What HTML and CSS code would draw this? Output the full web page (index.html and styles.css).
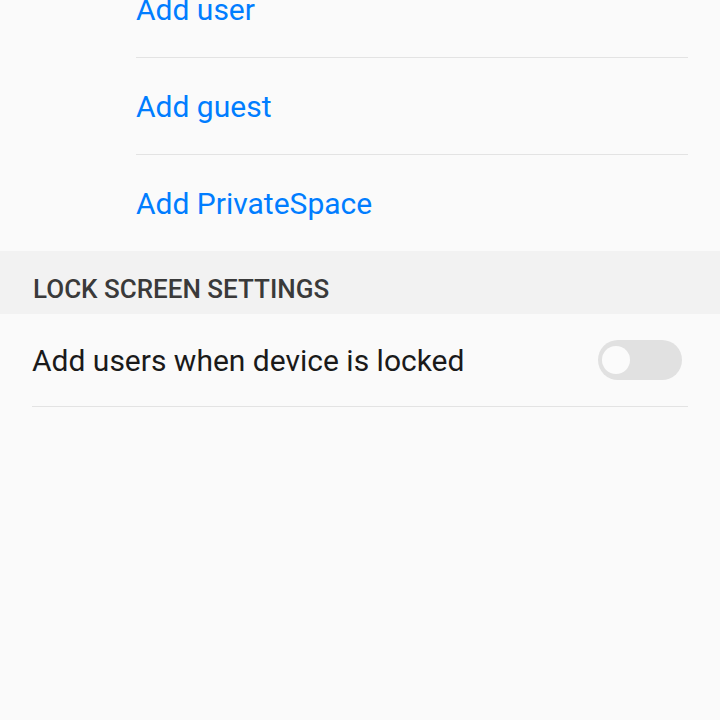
FILE: index.html
```html
<!DOCTYPE html>
<html lang="en">
  <head>
    <meta charset="UTF-8" />
    <meta name="viewport" content="width=device-width, initial-scale=1.0" />
    <title>Users</title>
    <link rel="stylesheet" href="styles.css">
  </head>
  <body>
    <main>
      <ul class="actions">
        <li class="action">Add user</li>
        <li class="action">Add guest</li>
        <li class="action">Add PrivateSpace</li>
      </ul>
      <h2 class="section-title">LOCK SCREEN SETTINGS</h2>
      <ul class="settings">
        <li class="setting">
          <span>Add users when device is locked</span>
          <span class="switch"><span class="thumb"></span></span>
        </li>
      </ul>
    </main>
  </body>
</html>
```

FILE: styles.css
```css
* {
  box-sizing: border-box;
  margin: 0;
  padding: 0;
}
html,
body {
  height: 100%;
}
body {
  background-color: #fafafa;
  font-family: Roboto, "Noto Sans", sans-serif;
  overflow: hidden;
}
ul {
  list-style: none;
}
.actions {
  margin-top: -39px;
}
.action {
  display: flex;
  align-items: center;
  height: 97px;
  margin: 0 32px 0 136px;
  border-bottom: 1px solid #e3e3e3;
  color: #007dff;
  font-size: 30px;
}
.action:last-child {
  height: 96px;
  border-bottom: none;
}
.section-title {
  display: flex;
  align-items: center;
  height: 63px;
  padding: 13px 0 0 33px;
  background-color: #f2f2f2;
  color: #3a3a3a;
  font-size: 26px;
  font-weight: 500;
}
.setting {
  display: flex;
  align-items: center;
  justify-content: space-between;
  height: 93px;
  margin: 0 32px;
  padding-right: 6px;
  border-bottom: 1px solid #e3e3e3;
  color: #1a1a1a;
  font-size: 30px;
}
.switch {
  display: flex;
  align-items: center;
  width: 84px;
  height: 40px;
  padding-left: 4px;
  border-radius: 20px;
  background-color: #e1e1e1;
}
.thumb {
  width: 28px;
  height: 28px;
  border-radius: 50%;
  background-color: #fbfbfb;
}
```
